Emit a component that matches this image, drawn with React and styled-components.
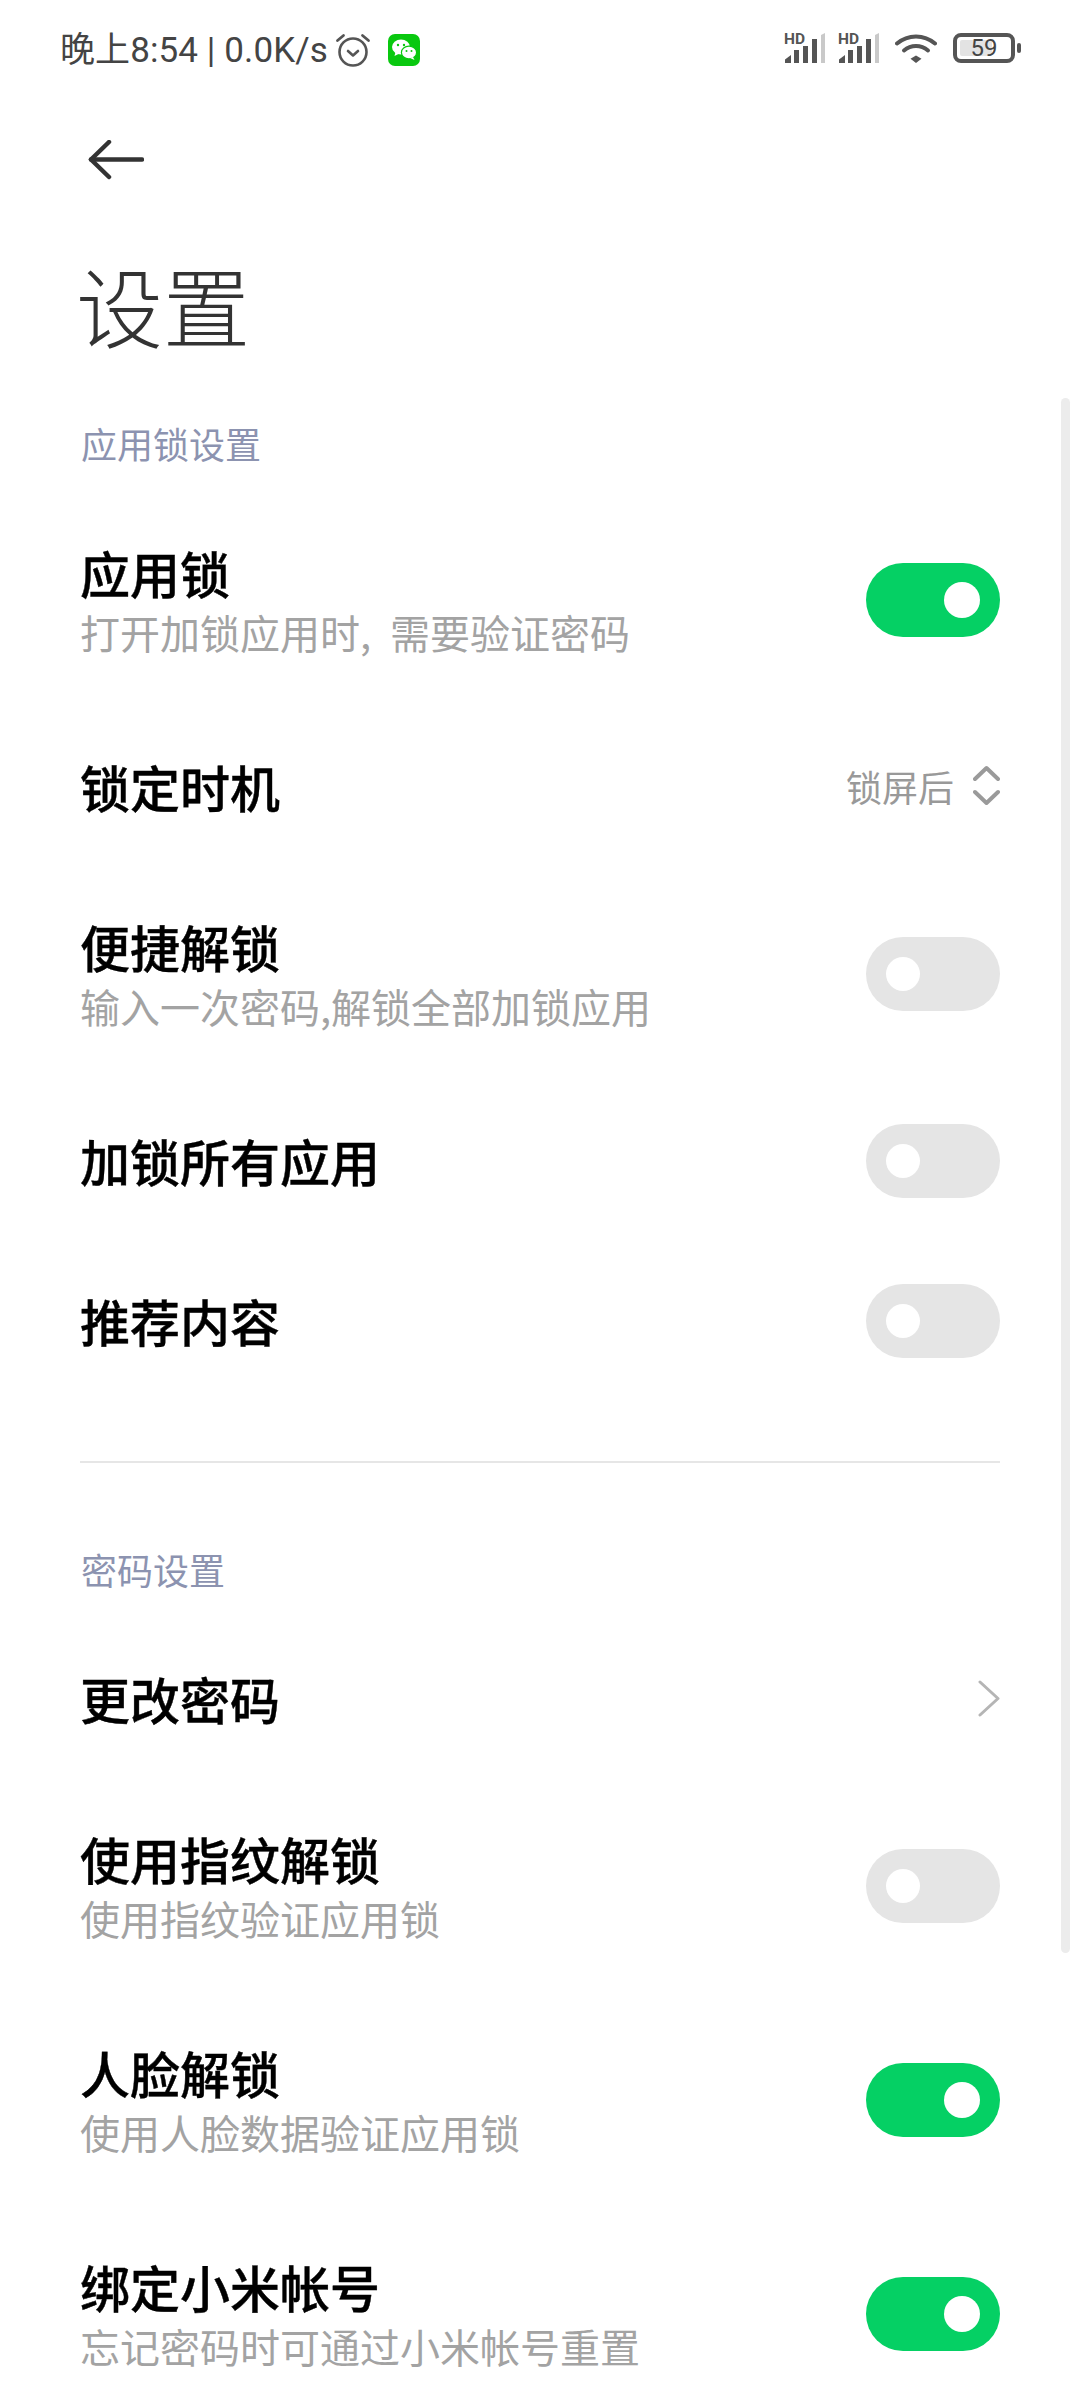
import React from "react";
import styled, { createGlobalStyle } from "styled-components";

const GlobalStyle = createGlobalStyle`
  html, body {
    margin: 0;
    padding: 0;
    background: #fff;
    font-family: "Noto Sans CJK SC", "Noto Sans", sans-serif;
  }
`;

const Page = styled.div`
  position: relative;
  width: 1080px;
  height: 2400px;
  overflow: hidden;
  background: #fff;
`;

const StatusBar = styled.div`
  height: 100px;
  padding: 0 59px 0 60px;
  box-sizing: border-box;
  display: flex;
  align-items: center;
  justify-content: space-between;
`;

const StatusLeft = styled.div`
  display: flex;
  align-items: center;
`;

const StatusRight = styled.div`
  display: flex;
  align-items: center;
  gap: 12px;
  margin-bottom: 4px;
`;

const StatusText = styled.span`
  font-family: "Roboto", "Noto Sans CJK SC", sans-serif;
  font-size: 35px;
  line-height: 42px;
  padding-top: 2px;
  letter-spacing: 0.1px;
  color: #444;
  white-space: nowrap;
`;

const BackBar = styled.div`
  height: 120px;
  padding-left: 88px;
  display: flex;
  align-items: center;
`;

const Title = styled.h1`
  margin: 0;
  padding-left: 76px;
  height: 176px;
  font-size: 87px;
  line-height: 168px;
  font-weight: 300;
  color: #333;
`;

const SectionLabel = styled.div`
  height: 97px;
  padding: 0 0 2px 81px;
  box-sizing: border-box;
  font-size: 36px;
  line-height: 95px;
  color: #8c93b0;
`;

const Row = styled.div`
  height: ${(p) => (p.$tall ? 214 : 160)}px;
  padding: 0 80px;
  box-sizing: border-box;
  display: flex;
  align-items: center;
  justify-content: space-between;
`;

const RowText = styled.div`
  display: flex;
  flex-direction: column;
  padding-bottom: ${(p) => (p.$tall ? 0 : 3)}px;
  padding-top: ${(p) => (p.$tall ? 4 : 0)}px;
`;

const RowTitle = styled.div`
  font-size: 50px;
  line-height: 60px;
  font-weight: 500;
  -webkit-text-stroke: 0.4px #000;
  color: #000;
`;

const RowSub = styled.div`
  font-size: 40px;
  line-height: 60px;
  word-spacing: 10px;
  color: #a3a3a3;
`;

const Track = styled.div`
  width: 134px;
  height: 74px;
  padding: 0 20px;
  box-sizing: border-box;
  border-radius: 37px;
  display: flex;
  align-items: center;
  justify-content: ${(p) => (p.$on ? "flex-end" : "flex-start")};
  background: ${(p) => (p.$on ? "#05d064" : "#e5e5e5")};
`;

const Thumb = styled.div`
  width: ${(p) => (p.$on ? 36 : 34)}px;
  height: ${(p) => (p.$on ? 36 : 34)}px;
  border-radius: 50%;
  background: #fff;
`;

const ValueBox = styled.div`
  display: flex;
  align-items: center;
  gap: 19px;
  margin-bottom: 3px;
`;

const ValueText = styled.span`
  font-size: 36px;
  color: #999;
`;

const Divider = styled.div`
  height: 2px;
  margin: 60px 80px 59px;
  background: #e6e6e6;
`;

const ScrollThumb = styled.div`
  position: absolute;
  left: 1061px;
  top: 398px;
  width: 9px;
  height: 1555px;
  border-radius: 5px;
  background: #ececec;
`;

const AlarmIcon = () => (
  <svg width="36" height="36" viewBox="0 0 36 36" fill="none" stroke="#555" strokeLinecap="round" style={{ marginLeft: 7 }}>
    <circle cx="18" cy="20" r="13.5" strokeWidth="2.6" />
    <path d="M13 19l5 4.5 5-4.5" strokeWidth="2.6" strokeLinejoin="round" />
    <path d="M2.5 8.5L8.5 3.5M27.5 3.5L33.5 8.5" strokeWidth="2.8" />
  </svg>
);

const WeChatIcon = () => (
  <svg width="32" height="32" viewBox="0 0 32 32" style={{ marginLeft: 17 }}>
    <rect width="32" height="32" rx="7" fill="#09c80f" />
    <ellipse cx="13" cy="13" rx="9" ry="7.6" fill="#fff" />
    <path d="M7.5 18l-1 4 5-2.5z" fill="#fff" />
    <ellipse cx="21" cy="18.5" rx="7.6" ry="6.4" fill="#fff" stroke="#09c80f" strokeWidth="1.2" />
    <path d="M25 23l1.5 3-4.5-2z" fill="#fff" />
    <circle cx="10" cy="11" r="1.2" fill="#09c80f" />
    <circle cx="16" cy="11" r="1.2" fill="#09c80f" />
    <circle cx="18.5" cy="17" r="1" fill="#09c80f" />
    <circle cx="23.5" cy="17" r="1" fill="#09c80f" />
  </svg>
);

const SignalSvg = styled.svg`
  overflow: visible;
`;

const SignalIcon = () => (
  <SignalSvg width="42" height="32" viewBox="0 0 42 32">
    <text x="0" y="12" fontFamily="Roboto, sans-serif" fontSize="15.5" fontWeight="700" fill="#555">HD</text>
    <path d="M1 31v-3.5L7 23v8z" fill="#555" />
    <rect x="10" y="18" width="5" height="13" fill="#555" />
    <rect x="19" y="14" width="5" height="17" fill="#555" />
    <rect x="28" y="7" width="5" height="24" fill="#555" />
    <path d="M37 3l4-2v30h-4z" fill="#c9c9c9" />
  </SignalSvg>
);

const WifiIcon = () => (
  <svg width="42" height="30" viewBox="0 0 42 30" fill="none" stroke="#555" strokeWidth="4" strokeLinecap="round" style={{ margin: "0 4px 0 3px" }}>
    <path d="M2 10.5C13 1 29 1 40 10.5" />
    <path d="M9 17.5C16 11.5 26 11.5 33 17.5" />
    <path d="M21 22.5l5.5 3.2L21 30l-5.5-4.3z" fill="#555" stroke="none" />
  </svg>
);

const BatteryBox = styled.div`
  position: relative;
  width: 62px;
  height: 30px;
  border: 4px solid #555;
  border-radius: 8px;
  box-sizing: border-box;
  margin-right: 6px;
  display: flex;
  align-items: center;
  justify-content: center;
  &::after {
    content: "";
    position: absolute;
    right: -10px;
    top: 6px;
    width: 4px;
    height: 10px;
    border-radius: 2px;
    background: #555;
  }
`;

const BatteryFill = styled.div`
  position: absolute;
  left: 3px;
  top: 3px;
  bottom: 3px;
  width: 32px;
  border-radius: 2px;
  background: #e3e3e3;
`;

const BatteryLevel = styled.span`
  position: relative;
  font-family: "Roboto", sans-serif;
  font-size: 24px;
  line-height: 22px;
  color: #444;
`;

const BackArrow = () => (
  <svg width="56" height="40" viewBox="0 0 56 40" fill="none" stroke="#333" strokeWidth="4.5" strokeLinecap="round" strokeLinejoin="round">
    <path d="M54 19.5H3" />
    <path d="M21 2L3 19.5 21 37" />
  </svg>
);

const UpDownIcon = () => (
  <svg width="27" height="41" viewBox="0 0 27 41" fill="none" stroke="#9a9a9a" strokeWidth="4" strokeLinecap="round" strokeLinejoin="round">
    <path d="M2 14L13.5 3 25 14" />
    <path d="M2 27l11.5 11L25 27" />
  </svg>
);

const ChevronIcon = () => (
  <svg width="22" height="37" viewBox="0 0 22 37" fill="none" stroke="#b5b5b5" strokeWidth="3" strokeLinecap="round" strokeLinejoin="round" style={{ marginBottom: 2 }}>
    <path d="M2 2l18 16.5L2 35" />
  </svg>
);

const Switch = ({ on }) => (
  <Track $on={on}>
    <Thumb $on={on} />
  </Track>
);

const SettingRow = ({ title, sub, children }) => (
  <Row $tall={!!sub}>
    <RowText $tall={!!sub}>
      <RowTitle>{title}</RowTitle>
      {sub && <RowSub>{sub}</RowSub>}
    </RowText>
    {children}
  </Row>
);

export default function App() {
  return (
    <Page>
      <GlobalStyle />
      <StatusBar>
        <StatusLeft>
          <StatusText>晚上8:54 | 0.0K/s</StatusText>
          <AlarmIcon />
          <WeChatIcon />
        </StatusLeft>
        <StatusRight>
          <SignalIcon />
          <SignalIcon />
          <WifiIcon />
          <BatteryBox>
            <BatteryFill />
            <BatteryLevel>59</BatteryLevel>
          </BatteryBox>
        </StatusRight>
      </StatusBar>
      <BackBar>
        <BackArrow />
      </BackBar>
      <Title>设置</Title>

      <SectionLabel>应用锁设置</SectionLabel>
      <SettingRow title="应用锁" sub="打开加锁应用时, 需要验证密码">
        <Switch on />
      </SettingRow>
      <SettingRow title="锁定时机">
        <ValueBox>
          <ValueText>锁屏后</ValueText>
          <UpDownIcon />
        </ValueBox>
      </SettingRow>
      <SettingRow title="便捷解锁" sub="输入一次密码,解锁全部加锁应用">
        <Switch />
      </SettingRow>
      <SettingRow title="加锁所有应用">
        <Switch />
      </SettingRow>
      <SettingRow title="推荐内容">
        <Switch />
      </SettingRow>

      <Divider />

      <SectionLabel>密码设置</SectionLabel>
      <SettingRow title="更改密码">
        <ChevronIcon />
      </SettingRow>
      <SettingRow title="使用指纹解锁" sub="使用指纹验证应用锁">
        <Switch />
      </SettingRow>
      <SettingRow title="人脸解锁" sub="使用人脸数据验证应用锁">
        <Switch on />
      </SettingRow>
      <SettingRow title="绑定小米帐号" sub="忘记密码时可通过小米帐号重置">
        <Switch on />
      </SettingRow>

      <ScrollThumb />
    </Page>
  );
}
